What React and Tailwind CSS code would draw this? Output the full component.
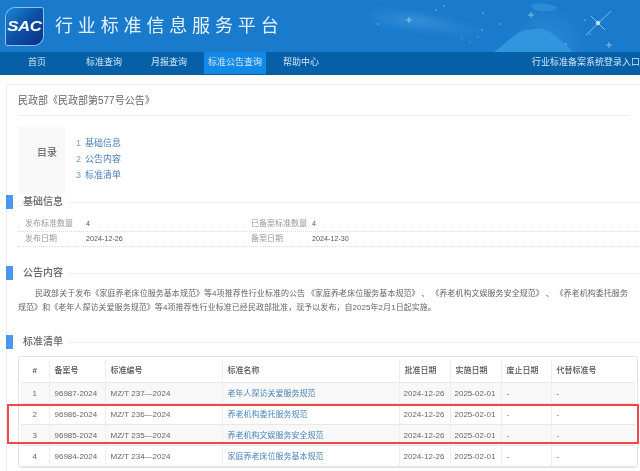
import React from 'react'

const nav = [
    { label: '首页', width: 'w-[74px]' },
    { label: '标准查询', width: 'w-[60px]' },
    { label: '月报查询', width: 'w-[70px]' },
    { label: '标准公告查询', width: 'w-[62px]', active: true },
    { label: '帮助中心', width: 'w-[70px]' },
]

const rows = [
    ['1', '96987-2024', 'MZ/T 237—2024', '老年人探访关爱服务规范'],
    ['2', '96986-2024', 'MZ/T 236—2024', '养老机构委托服务规范'],
    ['3', '96985-2024', 'MZ/T 235—2024', '养老机构文娱服务安全规范'],
    ['4', '96984-2024', 'MZ/T 234—2024', '家庭养老床位服务基本规范'],
]

const HeaderArt = () => (
    <svg className="absolute inset-0 w-full h-full" viewBox="0 0 640 52" aria-hidden="true">
        <defs>
            <linearGradient id="streak" x1="0" y1="0" x2="1" y2="0.4">
                <stop offset="0" stopColor="#6fb7ea" stopOpacity="0" />
                <stop offset="0.4" stopColor="#6fb7ea" stopOpacity="0.3" />
                <stop offset="1" stopColor="#6fb7ea" stopOpacity="0" />
            </linearGradient>
            <radialGradient id="globe" cx="0.5" cy="0.6" r="0.6">
                <stop offset="0" stopColor="#2a8ad9" />
                <stop offset="1" stopColor="#1a78c8" />
            </radialGradient>
        </defs>
        <path className="blur-[3px]" d="M370 8 C420 12 470 26 510 38 L500 44 C450 30 400 26 370 22 Z" fill="url(#streak)" />
        <circle cx="548" cy="38" r="36" fill="url(#globe)" />
        <path d="M494 52 C510 40 520 28 530 30 C540 26 550 30 560 40 C566 44 570 48 572 52 Z" fill="#3096de" />
        <path d="M530 6 C536 2 552 3 558 8 C550 13 536 13 530 6 Z" fill="#2b8cd8" />
        <g stroke="#d3ecfb" strokeWidth="0.7" opacity="0.8">
            <line x1="586" y1="35" x2="611" y2="11" />
            <line x1="591" y1="16" x2="605" y2="30" />
            <line x1="528" y1="15" x2="534" y2="15" />
            <line x1="531" y1="12" x2="531" y2="18" />
            <line x1="606" y1="45" x2="612" y2="45" />
            <line x1="609" y1="42" x2="609" y2="48" />
            <line x1="406" y1="20" x2="412" y2="20" />
            <line x1="409" y1="17" x2="409" y2="23" />
        </g>
        <circle cx="598" cy="23" r="2.2" fill="#e4f3fc" opacity="0.8" />
        <g fill="#8ecbf2" opacity="0.5">
            <circle cx="436" cy="10" r="1" /><circle cx="444" cy="6" r="1" /><circle cx="483" cy="13" r="1" />
            <circle cx="482" cy="30" r="1" /><circle cx="462" cy="38" r="0.8" /><circle cx="470" cy="42" r="0.8" />
            <circle cx="478" cy="37" r="0.8" /><circle cx="500" cy="24" r="1" /><circle cx="585" cy="20" r="1" />
            <circle cx="590" cy="34" r="1" /><circle cx="566" cy="44" r="1" /><circle cx="378" cy="24" r="1" />
        </g>
    </svg>
)

const Logo = () => (
    <div className="relative w-[37px] h-[37px] shrink-0 rounded-tl-[9px] rounded-br-[9px] rounded-tr-[2px] rounded-bl-[2px] bg-gradient-to-br from-[#1e86d6] via-[#0d4fa6] to-[#0b2f85] ring-1 ring-[#8cc2ea] flex items-center justify-center overflow-hidden">
        <span className="text-white font-bold italic text-[14px] leading-none tracking-[-0.3px] [font-family:'Liberation_Sans',sans-serif] scale-x-[1.2]">SAC</span>
    </div>
)

const SectionHeading = ({ title, className }) => (
    <div className={`flex items-center ${className}`}>
        <div className="w-[7px] h-[14px] bg-[#4a97ee]"></div>
        <h2 className="ml-[10px] mr-[5px] text-[10px] leading-[14px] font-medium text-[#666]">{title}</h2>
        <div className="flex-1 h-px bg-[#eeeeee]"></div>
    </div>
)

const InfoRow = ({ a, b, c, d }) => (
    <div className="flex items-center h-[15px] ml-[11px] px-[7px] border-b border-dotted border-[#dddddd] text-[8px]">
        <span className="w-[61px] text-[#999]">{a}</span>
        <span className="w-[165px] text-[7.2px] text-[#555]">{b}</span>
        <span className="w-[61px] text-[#999]">{c}</span>
        <span className="text-[7.2px] text-[#555]">{d}</span>
    </div>
)

const App = () => {
    return (
        <div className="relative w-[640px] h-[471px] overflow-hidden bg-white blur-[0.35px] [font-family:'Liberation_Sans','Noto_Sans_CJK_SC',sans-serif]">
            <header className="relative h-[52px] bg-[#1a7bcd] overflow-hidden">
                <HeaderArt />
                <div className="relative flex items-center h-full pl-[6px] py-[5px]">
                    <Logo />
                    <h1 className="ml-[12px] text-[18px] leading-none tracking-[4.85px] text-[#e4f1fa] font-normal">行业标准信息服务平台</h1>
                </div>
            </header>
            <nav className="flex items-center h-[23px] bg-[#0560a8] border-b border-[#0b5a9c] text-[9px] text-[#d5e6f3]">
                {nav.map((item) => (
                    <a key={item.label} className={`${item.width} h-full flex items-center justify-center ${item.active ? 'bg-[#1289e6]' : ''}`}>{item.label}</a>
                ))}
                <a className="ml-auto whitespace-nowrap">行业标准备案系统登录入口</a>
            </nav>

            <main className="mt-[9px] ml-[6px] border-l border-t border-[#f0f0f0] h-[400px]">
                <div className="mx-[11px] h-[31px] flex items-center border-b border-[#eeeeee] text-[10px] text-[#666]">民政部《民政部第577号公告》</div>

                <div className="flex mt-[11px] ml-[11px] h-[67px]">
                    <div className="w-[47px] bg-[#f8f8f8] flex items-center justify-end pr-[8px] pb-[16px] text-[10px] text-[#555]">目录</div>
                    <ul className="ml-[11px] pt-[8px] text-[9px] leading-[16px] text-[#4a7fb5]">
                        <li><span className="inline-block w-[9px] text-[#7aa5d2]">1</span>基础信息</li>
                        <li><span className="inline-block w-[9px] text-[#7aa5d2]">2</span>公告内容</li>
                        <li><span className="inline-block w-[9px] text-[#7aa5d2]">3</span>标准清单</li>
                    </ul>
                </div>

                <SectionHeading title="基础信息" className="-ml-px mt-px" />
                <div className="mt-[8px]">
                    <InfoRow a="发布标准数量" b="4" c="已备案标准数量" d="4" />
                    <InfoRow a="发布日期" b="2024-12-26" c="备案日期" d="2024-12-30" />
                </div>

                <SectionHeading title="公告内容" className="-ml-px mt-[19px]" />
                <p className="mt-[7px] mx-[11px] text-[8px] leading-[14px] text-[#666] indent-[17px] tracking-[0.05px] [word-spacing:-0.5px]">
                    民政部关于发布《家庭养老床位服务基本规范》等4项推荐性行业标准的公告 《家庭养老床位服务基本规范》 、 《养老机构文娱服务安全规范》 、 《养老机构委托服务规范》和《老年人探访关爱服务规范》等4项推荐性行业标准已经民政部批准，现予以发布，自2025年2月1日起实施。
                </p>

                <SectionHeading title="标准清单" className="-ml-px mt-[20px]" />

                <div className="mt-[7px] ml-[11px] w-[620px] border border-[#e2e2e2] rounded-[3px] px-[2px] pt-[2px]">
                    <table className="w-full table-fixed border-collapse text-[8px] text-[#666] [&_th]:pt-[2px] [&_td]:pt-[2px]">
                        <colgroup>
                            <col className="w-[28px]" />
                            <col className="w-[56px]" />
                            <col className="w-[117px]" />
                            <col className="w-[177px]" />
                            <col className="w-[51px]" />
                            <col className="w-[51px]" />
                            <col className="w-[50px]" />
                            <col />
                        </colgroup>
                        <thead>
                            <tr className="h-[23px] text-left text-[#555] border-b border-[#e8e8e8]">
                                <th className="text-center font-bold border-r border-[#eeeeee]">#</th>
                                <th className="pl-[5px] font-medium border-r border-[#eeeeee]">备案号</th>
                                <th className="pl-[5px] font-medium border-r border-[#eeeeee]">标准编号</th>
                                <th className="pl-[5px] font-medium border-r border-[#eeeeee]">标准名称</th>
                                <th className="pl-[5px] font-medium border-r border-[#eeeeee]">批准日期</th>
                                <th className="pl-[5px] font-medium border-r border-[#eeeeee]">实施日期</th>
                                <th className="pl-[5px] font-medium border-r border-[#eeeeee]">废止日期</th>
                                <th className="pl-[5px] font-medium">代替标准号</th>
                            </tr>
                        </thead>
                        <tbody>
                            {rows.map((row, i) => (
                                <tr key={row[0]} className={`h-[21px] border-b border-[#e8e8e8] ${i % 2 === 0 ? 'bg-[#f8f8f8]' : 'bg-white'}`}>
                                    <td className="text-center border-r border-[#eeeeee]">{row[0]}</td>
                                    <td className="pl-[5px] border-r border-[#eeeeee]">{row[1]}</td>
                                    <td className="pl-[5px] border-r border-[#eeeeee]">{row[2]}</td>
                                    <td className="pl-[5px] border-r border-[#eeeeee] text-[#4a86bd]">{row[3]}</td>
                                    <td className="pl-[4px] border-r border-[#eeeeee]">2024-12-26</td>
                                    <td className="pl-[4px] border-r border-[#eeeeee]">2025-02-01</td>
                                    <td className="pl-[5px] border-r border-[#eeeeee]">-</td>
                                    <td className="pl-[5px]">-</td>
                                </tr>
                            ))}
                        </tbody>
                    </table>
                </div>
            </main>

            {/* red annotation box drawn over the table */}
            <div className="absolute left-[7px] top-[404px] w-[632px] h-[40px] border-2 border-[#f0474c]"></div>
        </div>
    )
}

export default App
